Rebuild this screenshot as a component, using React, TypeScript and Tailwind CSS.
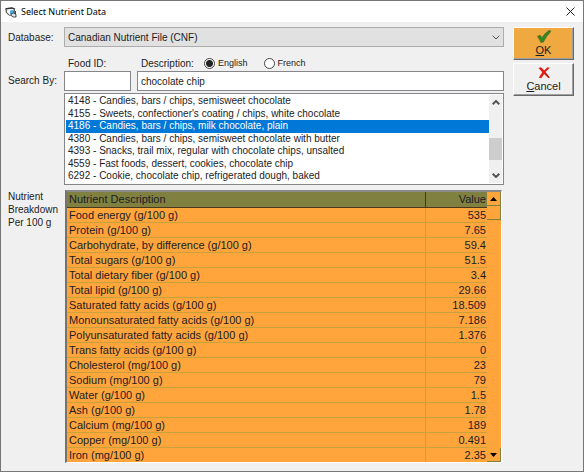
import { useState } from "react";

const foods = [
  "4148 - Candies, bars / chips, semisweet chocolate",
  "4155 - Sweets, confectioner's coating / chips, white chocolate",
  "4186 - Candies, bars / chips, milk chocolate, plain",
  "4380 - Candies, bars / chips, semisweet chocolate with butter",
  "4393 - Snacks, trail mix, regular with chocolate chips, unsalted",
  "4559 - Fast foods, dessert, cookies, chocolate chip",
  "6292 - Cookie, chocolate chip, refrigerated dough, baked",
];

const nutrients: [string, string][] = [
  ["Food energy (g/100 g)", "535"],
  ["Protein (g/100 g)", "7.65"],
  ["Carbohydrate, by difference (g/100 g)", "59.4"],
  ["Total sugars (g/100 g)", "51.5"],
  ["Total dietary fiber (g/100 g)", "3.4"],
  ["Total lipid (g/100 g)", "29.66"],
  ["Saturated fatty acids (g/100 g)", "18.509"],
  ["Monounsaturated fatty acids (g/100 g)", "7.186"],
  ["Polyunsaturated fatty acids (g/100 g)", "1.376"],
  ["Trans fatty acids (g/100 g)", "0"],
  ["Cholesterol (mg/100 g)", "23"],
  ["Sodium (mg/100 g)", "79"],
  ["Water (g/100 g)", "1.5"],
  ["Ash (g/100 g)", "1.78"],
  ["Calcium (mg/100 g)", "189"],
  ["Copper (mg/100 g)", "0.491"],
  ["Iron (mg/100 g)", "2.35"],
];

function Chevron({ className }: { className: string }) {
  return (
    <svg viewBox="0 0 8 5" className={className} fill="none" stroke="currentColor" aria-hidden="true">
      <path d="M.7.7 4 4 7.3.7" />
    </svg>
  );
}

function AppIcon() {
  return (
    <svg viewBox="0 0 12 12" className="h-3 w-3" aria-hidden="true">
      <path d="M1 2.500 7 2l2.500 1.500V9L5 9.500 1.500 6.500z" fill="#f8f8f8" stroke="#6b6b6b" strokeWidth=".7" />
      <path d="M.5 2.800 7 2l3 1.200" fill="none" stroke="#2a303a" strokeWidth="1.3" />
      <path d="M1.200 3v3.500L4.500 9.500" fill="none" stroke="#444" strokeWidth=".9" />
      <path d="M5 4.500 7.500 4l1.500 1.500-1.500 2.500H5z" fill="#49aede" />
      <path d="M6 8 8.500 7l2.500 1.500v2.500H8.500L6 9.500z" fill="#dfe7ea" stroke="#2b323a" strokeWidth=".9" />
      <path d="M9 4v3M10.500 5v3" fill="none" stroke="#2b323a" strokeWidth=".9" />
    </svg>
  );
}

function LanguageOption({ label, checked, onSelect }: { label: string; checked: boolean; onSelect: () => void }) {
  return (
    <label className="flex items-center gap-[3px] text-[9px]">
      <input
        type="radio"
        name="language"
        checked={checked}
        onChange={onSelect}
        className="h-[11px] w-[11px] appearance-none rounded-full border border-[#444] bg-white checked:bg-[radial-gradient(circle,#222_0_3px,white_4px)]"
      />
      {label}
    </label>
  );
}

const actionButton =
  "flex h-[33px] flex-col items-center border border-t-white border-l-white border-r-[#696969] border-b-[#696969] pt-[2px] text-[11px] leading-[14px] shadow-[inset_-1px_-1px_#a0a0a0]";
const sunkenInput = "h-5 border border-[#85858a] bg-white px-[3px] outline-none";

export default function App() {
  const [language, setLanguage] = useState("English");
  const [term, setTerm] = useState("chocolate chip");
  const [food, setFood] = useState(foods[2]);

  return (
    <main className="flex min-h-screen flex-col border border-[#777] bg-[#f0f0f0] font-['Liberation_Sans',Arial,sans-serif] text-[10px] text-[#1c1c24]">
      <header className="flex h-[21px] items-center gap-1 bg-white pr-[7px] pl-1 text-black">
        <AppIcon />
        <h1 className="flex-1 font-['Noto_Sans','Open_Sans',sans-serif] text-[9px]">Select Nutrient Data</h1>
        <button type="button" aria-label="Close" className="p-[1px]">
          <svg viewBox="0 0 9 9" className="h-[9px] w-[9px]" stroke="#222" aria-hidden="true">
            <path d="M.5.5 8.5 8.5M8.5.5.5 8.5" />
          </svg>
        </button>
      </header>

      <div className="flex gap-[9px] pt-[5px] pr-[9px] pb-2 pl-[7px]">
        <div className="flex min-w-0 flex-1 flex-col">
          <div className="flex items-center">
            <label htmlFor="database" className="w-14">Database:</label>
            <div className="relative flex-1">
              <select id="database" className="h-5 w-full appearance-none border border-[#adadad] bg-[#e1e1e1] px-[3px]">
                <option>Canadian Nutrient File (CNF)</option>
              </select>
              <Chevron className="pointer-events-none absolute top-2 right-1 h-[5px] w-2 text-[#555]" />
            </div>
          </div>

          <div className="flex items-end pt-[9px]">
            <label htmlFor="food-id" className="w-14 pb-1 leading-3">Search By:</label>
            <div className="flex w-[67px] flex-col">
              <label htmlFor="food-id" className="pl-1 leading-[15px]">Food ID:</label>
              <input id="food-id" className={sunkenInput} />
            </div>
            <div className="ml-[6px] flex min-w-0 flex-1 flex-col">
              <div className="flex h-[15px] items-center pl-1">
                <label htmlFor="description" className="w-[63px]">Description:</label>
                <div className="flex gap-4">
                  {["English", "French"].map((name) => (
                    <LanguageOption key={name} label={name} checked={language === name} onSelect={() => setLanguage(name)} />
                  ))}
                </div>
              </div>
              <input id="description" value={term} onChange={(e) => setTerm(e.target.value)} className={sunkenInput} />
            </div>
          </div>

          <div className="mt-[2px] ml-14 flex border border-[#85858a] bg-white p-[1px]">
            <select
              size={7}
              aria-label="Matching foods"
              value={food}
              onChange={(e) => setFood(e.target.value)}
              className="h-[88px] min-w-0 flex-1 appearance-none overflow-hidden bg-white outline-none"
            >
              {foods.map((name) => (
                <option
                  key={name}
                  value={name}
                  className="min-h-0 p-0 pl-[2px] leading-[14px] odd:h-[13px] even:h-3 checked:bg-[linear-gradient(#0078d7,#0078d7)] checked:text-white"
                >
                  {name}
                </option>
              ))}
            </select>
            <div className="flex w-[13px] flex-col items-center bg-[#f0f0f0] py-[5px]">
              <Chevron className="h-[5px] w-2 rotate-180 stroke-2 text-[#555]" />
              <span className="mt-[33px] h-[22px] w-full bg-[#cdcdcd]" />
              <Chevron className="mt-auto h-[5px] w-2 stroke-2 text-[#555]" />
            </div>
          </div>

          <div className="mt-[5px] flex items-start">
            <p id="breakdown" className="w-14 leading-[13px]">
              Nutrient
              <br />
              Breakdown
              <br />
              Per 100 g
            </p>
            <div className="mr-[2px] ml-[1px] flex min-w-0 flex-1 self-stretch border-t-2 border-r border-b border-l-2 border-t-[#8a8a8a] border-r-white border-b-white border-l-[#77736a] bg-[#ffa53c]">
              <table aria-labelledby="breakdown" className="flex-1 table-fixed border-collapse text-[11px] leading-[14px]">
                <thead>
                  <tr className="h-[15px] border-b border-[#4c3818] bg-[#808040]">
                    <th className="border-r border-[#3c3c20] p-0 pl-[2px] text-left font-normal">Nutrient Description</th>
                    <th className="w-[62px] p-0 pr-[1px] text-right font-normal">Value</th>
                  </tr>
                </thead>
                <tbody>
                  {nutrients.map(([name, value]) => (
                    <tr key={name} className="h-[15px] border-b border-[#c9a23c] last:border-b-0">
                      <td className="border-r border-[#c9a23c] p-0 pl-[2px]">{name}</td>
                      <td className="p-0 pr-[1px] text-right">{value}</td>
                    </tr>
                  ))}
                </tbody>
              </table>
              <div className="flex w-[14px] flex-col">
                <button type="button" aria-label="Scroll up" className="flex h-[14px] items-center justify-center border-r border-b border-[#80803c]">
                  <svg viewBox="0 0 7 4" className="h-1 w-[7px]" aria-hidden="true"><path d="M0 4 3.5 0 7 4z" /></svg>
                </button>
                <span className="h-[14px] border-r border-b border-[#80803c]" />
                <button type="button" aria-label="Scroll down" className="mt-auto flex h-[14px] items-center justify-center border-r border-b border-[#80803c]">
                  <svg viewBox="0 0 7 4" className="h-1 w-[7px]" aria-hidden="true"><path d="M0 0 3.5 4 7 0z" /></svg>
                </button>
              </div>
            </div>
          </div>
        </div>

        <div className="flex w-[61px] flex-col gap-[3px]">
          <button type="button" className={`${actionButton} bg-[#f0a840]`}>
            <svg viewBox="0 0 14 13" className="h-[13px] w-[14px]" aria-hidden="true">
              <path d="M.5 6.500 3 5.200l2 2.500Q8 3 12 .5L14 1.200Q9 6.500 6.300 12L4 12.500Q2.500 9 .5 6.500z" fill="#2f8a22" stroke="#4b6422" strokeWidth=".7" />
            </svg>
            <span><u>O</u>K</span>
          </button>
          <button type="button" className={`${actionButton} bg-[#f0f0f0]`}>
            <svg viewBox="0 0 12 13" className="h-[13px] w-3" aria-hidden="true">
              <path d="M.5 2 3 1.200Q6.500 4.500 11.500 11L10.500 12.200Q5 7.500.5 2z" fill="#e31b12" />
              <path d="M9.500 1.200 11.800 1.800Q6.500 6 3.300 12.200L.8 11.500Q4 5.500 9.500 1.200z" fill="#e31b12" />
              <path d="m7.500 7.500 4 4.200" stroke="#7c1b18" strokeWidth=".7" />
            </svg>
            <span><u>C</u>ancel</span>
          </button>
        </div>
      </div>
    </main>
  );
}
